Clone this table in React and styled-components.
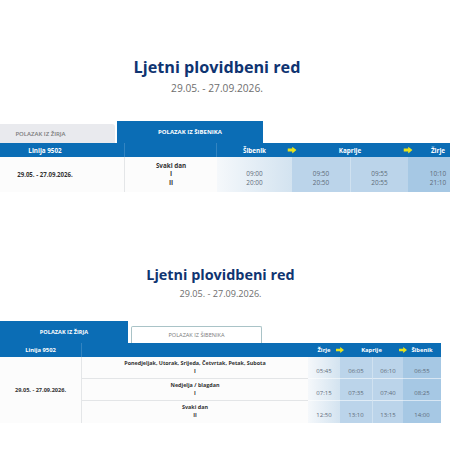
import React from 'react';
import styled, { createGlobalStyle, css } from 'styled-components';

const GlobalStyle = createGlobalStyle`
  html, body { margin: 0; padding: 0; background: #fff; overflow: hidden; }
  body { font-family: "Open Sans", "Liberation Sans", sans-serif; }
`;

const BLUE = '#0b6db5';

const Page = styled.div`
  width: 450px;
  height: 450px;
  overflow: hidden;
  display: flex;
  flex-direction: column;
`;

const Section = styled.section`
  width: ${(p) => p.$w}px;
  padding-top: ${(p) => p.$pt}px;
  display: flex;
  flex-direction: column;
  align-items: center;
`;

const Title = styled.h1`
  margin: 0;
  font-size: ${(p) => p.$fs}px;
  line-height: ${(p) => p.$lh}px;
  font-weight: 700;
  color: #0f3471;
`;

const DateLine = styled.p`
  margin: ${(p) => p.$mt}px 0 0;
  font-size: ${(p) => p.$fs}px;
  line-height: ${(p) => p.$lh}px;
  color: #6e6e6e;
`;

const Board = styled.div`
  width: ${(p) => p.$w}px;
  flex-shrink: 0;
  margin-top: ${(p) => p.$mt}px;
`;

const Tabs = styled.div`
  display: flex;
  align-items: flex-end;
  gap: ${(p) => p.$gap}px;
`;

const Tab = styled.div`
  box-sizing: border-box;
  width: ${(p) => p.$w}px;
  height: ${(p) => p.$h}px;
  display: flex;
  align-items: center;
  justify-content: center;
  font-size: ${(p) => p.$fs}px;
  text-transform: uppercase;
  white-space: nowrap;
  ${(p) =>
    p.$kind === 'active'
      ? css`
          background: ${BLUE};
          color: #fff;
          font-weight: 700;
        `
      : p.$kind === 'outline'
      ? css`
          background: #fff;
          color: #7a7a7a;
          border: 1px solid #a9c3c7;
          border-bottom: none;
          border-radius: 2px 2px 0 0;
        `
      : css`
          background: #e9eaee;
          color: #7b7b7b;
          font-weight: 600;
          border-radius: 0 3px 0 0;
        `}
`;

const Grid = styled.div`
  display: grid;
  grid-template-columns: ${(p) => p.$cols};
  grid-template-rows: ${(p) => p.$rows};
`;

const HeadCell = styled.div`
  grid-column: ${(p) => p.$col};
  grid-row: 1;
  position: relative;
  background: ${BLUE};
  color: #fff;
  font-weight: 700;
  font-size: ${(p) => p.$fs}px;
  display: flex;
  align-items: center;
  justify-content: center;
  white-space: nowrap;
  border-right: ${(p) => (p.$divider ? '1px solid rgba(255,255,255,0.16)' : 'none')};
`;

const ArrowWrap = styled.span`
  position: absolute;
  right: 0;
  top: 50%;
  transform: translate(50%, -50%);
  display: flex;
  z-index: 1;
`;

const DateCell = styled.div`
  grid-column: 1;
  grid-row: 2 / span ${(p) => p.$span};
  background: #fcfcfc;
  border-right: 1px solid #e4e6e8;
  display: flex;
  align-items: center;
  justify-content: center;
  font-weight: 700;
  font-size: ${(p) => p.$fs}px;
  color: #333;
  white-space: nowrap;
`;

const DayCell = styled.div`
  grid-column: 2;
  grid-row: ${(p) => p.$row};
  background: #fcfcfc;
  border-bottom: ${(p) => (p.$sep ? '1px solid #e3e5e7' : 'none')};
  display: flex;
  flex-direction: column;
  align-items: center;
  justify-content: center;
  font-weight: 700;
  font-size: ${(p) => p.$fs}px;
  color: #333;
  white-space: nowrap;
`;

const bgFor = (kind) => {
  if (kind === 'first') return 'linear-gradient(to right, #f5f8fb, #d3e3f0)';
  if (kind === 'mid') return '#bbd4ea';
  return '#a6c8e4';
};

const TimeCell = styled.div`
  grid-column: ${(p) => p.$col};
  grid-row: ${(p) => p.$row};
  background: ${(p) => bgFor(p.$kind)};
  border-bottom: ${(p) => (p.$sep ? '1px solid rgba(255,255,255,0.55)' : 'none')};
  border-left: ${(p) => (p.$split ? '1px solid rgba(255,255,255,0.3)' : 'none')};
  display: flex;
  flex-direction: column;
  align-items: center;
  justify-content: center;
  font-size: ${(p) => p.$fs}px;
  color: #5e6b78;
`;

const Line = styled.span`
  display: block;
  height: ${(p) => p.$lh}px;
  line-height: ${(p) => p.$lh}px;
`;

const Arrow = ({ size }) => (
  <svg width={size} height={size * 0.75} viewBox="0 0 8 6">
    <path d="M0 1.7H4.2V0L8 3L4.2 6V4.3H0Z" fill="#e8e21c" />
  </svg>
);

const Timetable = ({ t }) => (
  <Board $w={t.width} $mt={t.boardTop}>
    <Tabs $gap={t.tabGap}>
      {t.tabs.map((tab) => (
        <Tab key={tab.label} $w={tab.w} $h={tab.h} $kind={tab.kind} $fs={t.tabFs}>
          {tab.label}
        </Tab>
      ))}
    </Tabs>
    <Grid $cols={t.cols} $rows={t.rowsTpl}>
      <HeadCell $col="1" $fs={t.headFs} $divider>
        Linija 9502
      </HeadCell>
      <HeadCell $col="2" $fs={t.headFs} $divider={t.dayDivider} />
      {t.stations.map((s) => (
        <HeadCell key={s.name} $col={s.col} $fs={t.headFs}>
          {s.name}
          {s.arrow && (
            <ArrowWrap>
              <Arrow size={t.arrow} />
            </ArrowWrap>
          )}
        </HeadCell>
      ))}
      <DateCell $span={t.rows.length} $fs={t.dateFs}>
        29.05. - 27.09.2026.
      </DateCell>
      {t.rows.map((r, i) => (
        <React.Fragment key={i}>
          <DayCell $row={i + 2} $sep={i < t.rows.length - 1} $fs={t.dayFs}>
            {r.day.map((d, k) => (
              <Line key={k} $lh={t.lh}>
                {d}
              </Line>
            ))}
          </DayCell>
          {r.times.map((col, c) => (
            <TimeCell
              key={c}
              $col={c + 3}
              $row={i + 2}
              $kind={t.kinds[c]}
              $split={c === 2}
              $sep={i < t.rows.length - 1}
              $fs={t.timeFs}
            >
              <Line $lh={t.lh} />
              {col.map((tm, k) => (
                <Line key={k} $lh={t.lh}>
                  {tm}
                </Line>
              ))}
            </TimeCell>
          ))}
        </React.Fragment>
      ))}
    </Grid>
  </Board>
);

const first = {
  width: 502,
  boardTop: 26,
  tabGap: 2,
  tabFs: 6,
  headFs: 6.3,
  dateFs: 6.1,
  dayFs: 6.3,
  timeFs: 6.4,
  lh: 8.4,
  arrow: 9,
  dayDivider: true,
  cols: '159px 92px 75px 58px 58px 60px',
  rowsTpl: '14px 35px',
  tabs: [
    { label: 'Polazak iz Žirja', w: 149, h: 19, kind: 'idle' },
    { label: 'Polazak iz Šibenika', w: 146, h: 22, kind: 'active' },
  ],
  stations: [
    { name: 'Šibenik', col: '3', arrow: true },
    { name: 'Kaprije', col: '4 / span 2', arrow: true },
    { name: 'Žirje', col: '6' },
  ],
  kinds: ['first', 'mid', 'mid', 'last'],
  rows: [
    {
      day: ['Svaki dan', 'I', 'II'],
      times: [
        ['09:00', '20:00'],
        ['09:50', '20:50'],
        ['09:55', '20:55'],
        ['10:10', '21:10'],
      ],
    },
  ],
};

const second = {
  width: 441,
  boardTop: 20,
  tabGap: 3,
  tabFs: 5.6,
  headFs: 5.8,
  dateFs: 5.6,
  dayFs: 5.4,
  timeFs: 6,
  lh: 7.6,
  arrow: 8,
  dayDivider: false,
  cols: '82px 226px 32px 32px 31px 38px',
  rowsTpl: '14px 22px 22px 22px',
  tabs: [
    { label: 'Polazak iz Žirja', w: 128, h: 22, kind: 'active' },
    { label: 'Polazak iz Šibenika', w: 131, h: 17, kind: 'outline' },
  ],
  stations: [
    { name: 'Žirje', col: '3', arrow: true },
    { name: 'Kaprije', col: '4 / span 2', arrow: true },
    { name: 'Šibenik', col: '6' },
  ],
  kinds: ['first', 'mid', 'mid', 'last'],
  rows: [
    {
      day: ['Ponedjeljak, Utorak, Srijeda, Četvrtak, Petak, Subota', 'I'],
      times: [['05:45'], ['06:05'], ['06:10'], ['06:55']],
    },
    {
      day: ['Nedjelja / blagdan', 'I'],
      times: [['07:15'], ['07:35'], ['07:40'], ['08:25']],
    },
    {
      day: ['Svaki dan', 'II'],
      times: [['12:50'], ['13:10'], ['13:15'], ['14:00']],
    },
  ],
};

export default function App() {
  return (
    <>
      <GlobalStyle />
      <Page>
        <Section $w={434} $pt={56}>
          <Title $fs={16.2} $lh={22}>Ljetni plovidbeni red</Title>
          <DateLine $fs={10.2} $lh={14} $mt={3}>29.05. - 27.09.2026.</DateLine>
          <Timetable t={first} />
        </Section>
        <Section $w={441} $pt={73}>
          <Title $fs={14.4} $lh={20}>Ljetni plovidbeni red</Title>
          <DateLine $fs={9.1} $lh={14} $mt={2}>29.05. - 27.09.2026.</DateLine>
          <Timetable t={second} />
        </Section>
      </Page>
    </>
  );
}
